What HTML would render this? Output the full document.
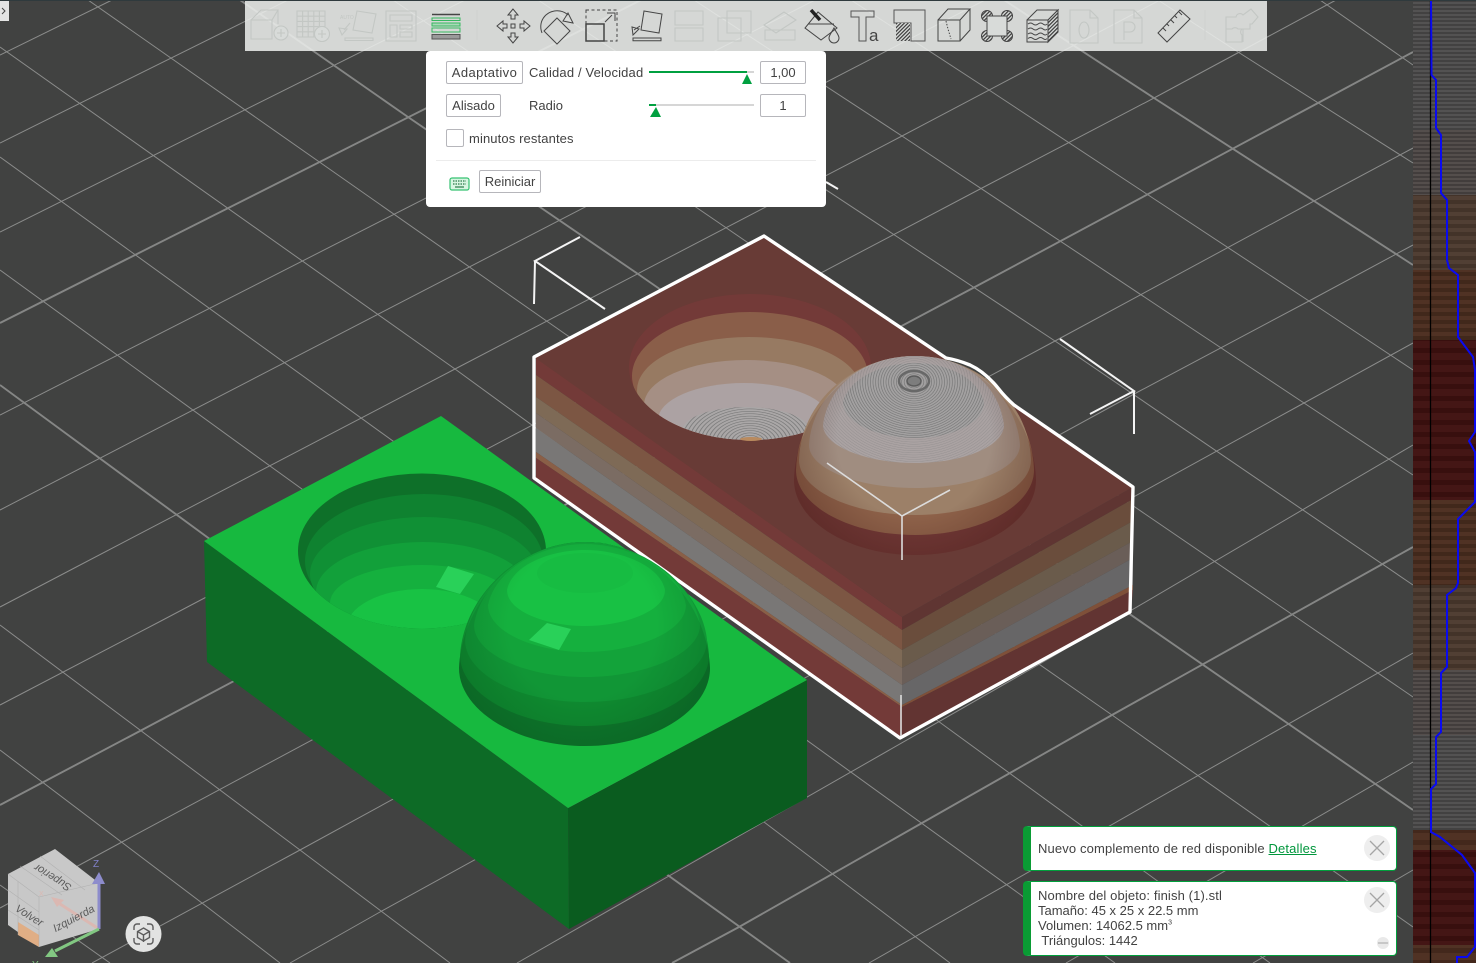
<!DOCTYPE html>
<html><head><meta charset="utf-8"><style>
html,body{margin:0;padding:0;background:#414241}
body{width:1476px;height:963px;position:relative;overflow:hidden;font-family:"Liberation Sans",sans-serif;font-size:13px;color:#424242}
svg{position:absolute;left:0;top:0}
.a{position:absolute;white-space:pre;line-height:16px}
.btn{position:absolute;box-sizing:border-box;border:1px solid #b6b6bb;border-radius:2px;height:23px;line-height:21px;text-align:center;background:#fff}
#panel{position:absolute;left:426px;top:51px;width:400px;height:156px;background:#fff;border-radius:4px}
.note{position:absolute;left:1023px;width:374px;box-sizing:border-box;background:#fff;border:1px solid #00a03c;border-left:8px solid #0a9b34;border-radius:4px}
</style></head><body>
<svg width="1476" height="963" viewBox="0 0 1476 963" xmlns="http://www.w3.org/2000/svg">
<defs>
<radialGradient id="rg" gradientUnits="userSpaceOnUse" cx="0" cy="0" r="2.6" spreadMethod="repeat" gradientTransform="translate(914 382) scale(1 .83)"><stop offset="0" stop-color="#a3a1a1"/><stop offset=".5" stop-color="#a3a1a1"/><stop offset=".8" stop-color="#747474"/><stop offset="1" stop-color="#a3a1a1"/></radialGradient>
<radialGradient id="rg2" gradientUnits="userSpaceOnUse" cx="0" cy="0" r="2.6" spreadMethod="repeat" gradientTransform="translate(914 382) scale(1 .83)"><stop offset="0" stop-color="#aaa2a2"/><stop offset=".6" stop-color="#aaa2a2"/><stop offset=".85" stop-color="#949090"/><stop offset="1" stop-color="#aaa2a2"/></radialGradient>
<radialGradient id="rb" gradientUnits="userSpaceOnUse" cx="0" cy="0" r="2.4" spreadMethod="repeat" gradientTransform="translate(750 442) scale(1.6 1)"><stop offset="0" stop-color="#aaa7a7"/><stop offset=".55" stop-color="#aaa7a7"/><stop offset=".8" stop-color="#747474"/><stop offset="1" stop-color="#aaa7a7"/></radialGradient>
<radialGradient id="sh" gradientUnits="userSpaceOnUse" cx="582" cy="625" r="135"><stop offset=".55" stop-color="#003010" stop-opacity="0"/><stop offset="1" stop-color="#003010" stop-opacity=".2"/></radialGradient>
<radialGradient id="shr" gradientUnits="userSpaceOnUse" cx="914" cy="440" r="128"><stop offset=".6" stop-color="#3c140f" stop-opacity="0"/><stop offset="1" stop-color="#3c140f" stop-opacity=".3"/></radialGradient>
<pattern id="hatch" width="2.6" height="2.6" patternUnits="userSpaceOnUse" patternTransform="rotate(45)"><rect width="2.6" height="2.6" fill="#d8dbd9"/><rect width="1.2" height="2.6" fill="#3c3c3c"/></pattern>
<pattern id="s4" width="4" height="4" patternUnits="userSpaceOnUse"><rect width="4" height="2" fill="#000" fill-opacity=".15"/><rect y="2" width="4" height="2" fill="#fff" fill-opacity=".03"/></pattern>
<pattern id="s8" width="8" height="8" patternUnits="userSpaceOnUse"><rect width="8" height="4" fill="#000" fill-opacity=".14"/><rect y="4" width="8" height="4" fill="#fff" fill-opacity=".02"/></pattern>
<pattern id="s12" width="12" height="12" patternUnits="userSpaceOnUse"><rect width="12" height="5" fill="#000" fill-opacity=".12"/><rect y="5" width="12" height="7" fill="#fff" fill-opacity=".02"/></pattern>
<clipPath id="gb"><ellipse cx="422" cy="551" rx="124" ry="77.5"/></clipPath>
<clipPath id="rbc"><ellipse cx="750" cy="367" rx="121" ry="73"/></clipPath>
</defs>
<rect width="1476" height="963" fill="#414241"/>
<!-- grid -->
<g fill="none" stroke="#8b8c8b" stroke-width="1">
<path d="M0 55L112 0M0 143L288 0M0 232L465 0M0 415L815 0M0 510L985 0M0 607L82 564 455 369 902 136 1065 50 1160 0M0 705L159 622 982 188 1154 98 1336 0M0 908L122 842 1055 341 1314 201 1413 148M92 963L300 850 1136 393 1309 301 1413 245M290 963L380 912 1304 403 1413 343M517 963L669 876 1038 665 1413 445M869 963L1413 653M1066 963L1413 762M1253 963L1413 870"/>
<path d="M0 885L110 963M0 750L202 903 280 963M0 625L300 850 381 911 450 963M0 270L270 466 764 822 950 963M0 157L1115 963M0 47L455 369 1270 963M88 0L548 322 1112 715 1413 927M393 0L725 227 1413 697M538 0L893 234 1055 341 1413 585M694 0L902 136 1304 403 1413 475M851 0L989 90 1309 301 1413 370M1158 0L1238 52 1413 163M1320 0L1413 65"/>
</g>
<g fill="none" stroke="#858685" stroke-width="1.9">
<path d="M0 323L641 0M0 805L140 731 973 288 1318 103 1413 52M672 963L739 927 1112 715 1413 547M0 385L177 515 669 876 790 963M240 0L408 117 638 274 1413 810M1004 0L1154 98 1314 201 1413 265"/>
</g>
<!-- green block -->
<path d="M204 541L568 808 569 929 207 662Z" fill="#0d6b26"/>
<path d="M568 808L807 680 807 798 569 929Z" fill="#0a5c1f"/>
<path d="M441 416L204 541 568 808 807 680Z" fill="#17b93f"/>
<ellipse cx="422" cy="551" rx="124" ry="77.5" fill="#0e7029"/>
<g clip-path="url(#gb)">
<ellipse cx="424" cy="561" rx="119" ry="67" fill="#0f8230"/>
<ellipse cx="424" cy="574" rx="114" ry="57" fill="#109035"/>
<ellipse cx="423" cy="592" rx="107" ry="50" fill="#12a03a"/>
<ellipse cx="422" cy="603" rx="92" ry="38" fill="#15b03e"/>
<ellipse cx="422" cy="629" rx="76" ry="40" fill="#18c244"/>
</g>
<path d="M448 566L474 574 460 594 436 587Z" fill="#29d159"/>
<!-- red block -->
<path d="M536 357L902 617 902 630 536 375Z" fill="#733a38"/>
<path d="M536 375L902 630 902 650 536 397Z" fill="#7c5643"/>
<path d="M536 397L902 650 902 668 536 413Z" fill="#7e6a56"/>
<path d="M536 413L902 668 902 685 536 428Z" fill="#7b6c63"/>
<path d="M536 428L902 685 902 705 536 452Z" fill="#797776"/>
<path d="M536 452L902 705 902 707 536 458Z" fill="#8a5f47"/>
<path d="M536 458L902 707 902 738 536 478Z" fill="#733a38"/>
<path d="M1133 487L902 617 902 630 1133 499Z" fill="#5f3532"/>
<path d="M1133 499L902 630 902 650 1133 521Z" fill="#6a4d3c"/>
<path d="M1133 521L902 650 902 668 1133 541Z" fill="#6a5b4b"/>
<path d="M1133 541L902 668 902 685 1133 558Z" fill="#6a5e58"/>
<path d="M1133 558L902 685 902 705 1133 585Z" fill="#676667"/>
<path d="M1133 585L902 705 902 707 1133 590Z" fill="#7f5039"/>
<path d="M1133 590L902 707 902 738 1131 612Z" fill="#623432"/>
<path d="M764 236L534 357 902 617 1133 487Z" fill="#683b36"/>
<ellipse cx="750" cy="367" rx="121" ry="73" fill="#733a38"/>
<g clip-path="url(#rbc)">
<ellipse cx="750" cy="376" rx="118" ry="64" fill="#8a5e49"/>
<ellipse cx="749" cy="390" rx="112" ry="53" fill="#977a62"/>
<ellipse cx="746" cy="405" rx="102" ry="45" fill="#a58f84"/>
<ellipse cx="744" cy="420" rx="86" ry="37" fill="#aca2a3"/>
<ellipse cx="746" cy="431" rx="64" ry="24" fill="url(#rb)"/>
</g>
<ellipse cx="751" cy="439" rx="11" ry="2" fill="#b98a5e"/>
<!-- red dome -->
<path d="M794 480C796 410 855 356 915 356C975 356 1034 410 1036 480C1036 521 981 555 915 555C849 555 794 521 794 480Z" fill="#703836"/>
<path d="M796 470C798 405 855 356 915 356C975 356 1032 405 1034 470C1034 506 980 535 915 535C850 535 796 506 796 470Z" fill="#8d6149"/>
<path d="M799 460C801 400 855 356 915 356C975 356 1029 400 1031 460C1031 490 978 515 915 515C852 515 799 490 799 460Z" fill="#9c8068"/>
<path d="M809 445C812 395 858 356 915 356C972 356 1016 395 1020 445C1020 469 972 488 915 488C858 488 809 469 809 445Z" fill="#a08d80"/>
<path d="M823 425C828 385 865 356 915 356C965 356 999 385 1004 425C1004 446 964 463 915 463C866 463 823 446 823 425Z" fill="url(#rg2)"/>
<path d="M843 402C848 380 880 363 915 363C950 363 979 380 984 402C984 423 952 438 915 438C878 438 843 423 843 402Z" fill="url(#rg)"/>
<ellipse cx="914" cy="381" rx="15" ry="10" fill="none" stroke="#686868" stroke-width="2.500"/>
<ellipse cx="914" cy="381" rx="7" ry="5" fill="#7d7d7d" stroke="#5c5c5c" stroke-width="1.500"/>
<path d="M794 480C796 410 855 356 915 356C975 356 1034 410 1036 480C1036 521 981 555 915 555C849 555 794 521 794 480Z" fill="url(#shr)"/>
<!-- white outline and boxes -->
<path d="M764 236L534 357 534 478 900 738 1130 612 1133 487 1014 405Q1005 397 998 388Q985 372 970 365Q958 360 946 358Z" fill="none" stroke="#fff" stroke-width="3.400" stroke-linejoin="round"/>
<g fill="none" stroke="#f4f4f4" stroke-width="2">
<path d="M580 237L535 261 605 309M535 261L534 304M1060 339L1134 391 1090 414M1134 391L1134 434M826 182L838 189"/>
</g>
<g fill="none" stroke="#dcdcdc" stroke-width="1.6"><path d="M827 463L902 516 950 490M902 516L902 560M901 695L901 736"/></g>
<!-- green dome -->
<path d="M459 668C462 600 520 542 585 542C650 542 707 600 710 668C710 711 652 746 585 746C518 746 459 711 459 668Z" fill="#0e762b"/>
<path d="M460 655C464 595 520 542 585 542C650 542 705 595 709 655C709 694 652 726 585 726C518 726 460 694 460 655Z" fill="#0f8a30"/>
<path d="M465 640C470 590 525 542 585 542C645 542 702 590 707 640C707 675 650 702 585 702C520 702 465 675 465 640Z" fill="#119636"/>
<path d="M474 625C480 583 530 542 585 542C640 542 695 583 700 625C700 654 645 677 585 677C525 677 474 654 474 625Z" fill="#13a33a"/>
<path d="M488 605C495 570 540 544 585 544C630 544 680 570 686 605C686 632 635 652 585 652C535 652 488 632 488 605Z" fill="#15b03e"/>
<path d="M507 590C512 565 550 550 585 550C620 550 660 565 665 590C665 612 622 626 585 626C548 626 507 612 507 590Z" fill="#18c144"/>
<ellipse cx="585" cy="573" rx="48" ry="20" fill="#17bc42"/>
<path d="M459 668C462 600 520 542 585 542C650 542 707 600 710 668C710 711 652 746 585 746C518 746 459 711 459 668Z" fill="url(#sh)"/>
<path d="M547 623L571 629 559 650 529 640Z" fill="#29d159"/>
<!-- right strip -->
<rect x="1413" y="0" width="63" height="130" fill="#4d4c4c"/>
<rect x="1413" y="130" width="63" height="65" fill="#4e4846"/>
<rect x="1413" y="195" width="63" height="75" fill="#4e3b30"/>
<rect x="1413" y="270" width="63" height="70" fill="#4c2e20"/>
<rect x="1413" y="340" width="63" height="160" fill="#401110"/>
<rect x="1413" y="500" width="63" height="85" fill="#4c2e20"/>
<rect x="1413" y="585" width="63" height="85" fill="#4e3b30"/>
<rect x="1413" y="670" width="63" height="65" fill="#4e4846"/>
<rect x="1413" y="735" width="63" height="95" fill="#4d4c4c"/>
<rect x="1413" y="830" width="63" height="20" fill="#4c2e20"/>
<rect x="1413" y="850" width="63" height="95" fill="#401110"/>
<rect x="1413" y="945" width="63" height="18" fill="#4c2e20"/>
<rect x="1413" y="0" width="63" height="195" fill="url(#s4)"/>
<rect x="1413" y="195" width="63" height="145" fill="url(#s8)"/>
<rect x="1413" y="340" width="63" height="160" fill="url(#s12)"/>
<rect x="1413" y="500" width="63" height="170" fill="url(#s8)"/>
<rect x="1413" y="670" width="63" height="160" fill="url(#s4)"/>
<rect x="1413" y="830" width="63" height="133" fill="url(#s12)"/>
<path d="M1430.500 0V963" stroke="#000" stroke-width="1.300"/>
<path d="M1431 0L1431.500 75 1436 80V128L1441 135V193L1447 200V260L1449 268 1458 275V337L1473 357 1475 370V432L1469 441 1475 452V502L1458 519V583L1456 588 1447 595V667L1441 673V732L1436 737V784L1431 789V832L1440 837 1462 855 1475 873V947L1467 957H1457V963" fill="none" stroke="#0a0af0" stroke-width="2"/>
<!-- top dark line -->
<rect width="1476" height="1" fill="#2f3a3d"/>
<!-- toolbar -->
<rect x="245" y="1" width="1022" height="50" fill="#ebeeec" fill-opacity=".87"/>
<g fill="none" stroke="#c3c7c4" stroke-width="1.100">
<path d="M251 20h21v19h-21zM251 20l10-10h17l-6 10M272 39M278 10v14"/><circle cx="281" cy="33" r="7" fill="#d8dbd9"/><path d="M277 33h8M281 29v8"/>
<path d="M297 11h28v26h-28zM302.600 11v26M308.200 11v26M313.800 11v26M319.400 11v26M297 16.200h28M297 21.400h28M297 26.600h28M297 31.800h28"/><circle cx="322" cy="34" r="7.500" fill="#d8dbd9"/><path d="M318 34h8M322 30v8"/>
<path d="M357 11l19 3-4 19-19-3zM345 38h28v2.500h-28zM342 35l-3-7 8 1zM344 30l6-7"/>
<path d="M386 11h30v30h-30zM390 15h22v6h-22zM390 25h7v12h-7zM400 25h12v4h-12zM400 32h12v5h-12z"/>
<path d="M477 10v30" stroke="#cfd2d0"/>
<path d="M675 11h28v14h-28zM675 28h28v13h-28z"/>
<path d="M727 11h24v22h-24zM718 18h23v23h-23zM727 18h14v15h-14z"/>
<path d="M765 30h30v10h-30zM764 25l20-13 12 8-20 13z"/>
<path d="M1070 10h20l8 8v25h-28zM1090 10v8h8"/><ellipse cx="1084" cy="30" rx="5" ry="8"/>
<path d="M1114 10h20l8 8v25h-28zM1134 10v8h8M1124 40V22h6a5 5 0 0 1 0 10h-6"/>
<path d="M1205 10v30" stroke="#cfd2d0"/>
<path d="M1226 17h10a4 4 0 0 1 7-2l8-6 7 8-6 7h-2v5h-8a4 4 0 0 0 0 6v7h-16zM1226 29h6a4 4 0 0 1 6 0h5v13"/>
</g>
<text x="340" y="19" font-size="5" fill="#c3c7c4" font-family="Liberation Sans,sans-serif">AUTO</text>
<g fill="none" stroke="#454545" stroke-width="1">
<path d="M432 14.500h28" stroke-width="1.600"/>
<rect x="432" y="18" width="28" height="2.500" stroke="#35b860" stroke-width="1"/>
<rect x="432" y="23" width="28" height="3" stroke="#35b860" stroke-width="1" fill="#aad8b8"/>
<rect x="432" y="28" width="28" height="4" stroke="#35b860" stroke-width="1"/>
<rect x="432" y="34.500" width="28" height="4.500" stroke="#555" fill="#9a9a9a" stroke-width="1"/>
<path d="M513 9l-5 6h3v4h4v-4h3zM513 43l-5-6h3v-4h4v4h3zM497 26l6-5v3h4v4h-4v3zM530 26l-6-5v3h-4v4h4v3zM511 24h4v4h-4z"/>
<path d="M557 18l13 13-13 13-13-13zM542 33C537 20 548 9 560 11C563 11.500 566 13 568 15M573 23l-5-10-5 8z"/>
<path d="M586 10h31v31h-31z" stroke-dasharray="3 2.500"/><path d="M586 24h18v17h-18z" stroke-width="1.500"/><path d="M605 22l7-7M607 13h8v8"/>
<path d="M644 11l18 3-3 19-18-3zM633 38h28v2.800h-28zM640 26l-6 4M632 27l1 8 6-6z"/>
<path d="M818 12L805 28 821 40 837 28zM808 24h26"/><path d="M811 10l9 10" stroke-width="3.500" stroke="#222"/>
<path d="M834 28c-2 4-5 7-5 10a5 5 0 0 0 10 0c0-3-3-6-5-10z"/>
<path d="M851 11h23v6h-8v24h-7V17h-8z" stroke="#555"/>
<path d="M894 10h31v31h-14V23h-17z" stroke="#555"/><rect x="896" y="23" width="14" height="18" fill="url(#hatch)" stroke="none"/>
<path d="M938 20h22v21h-22zM938 20l10-11h22l-10 11M970 9v21l-10 11" stroke="#444"/><path d="M946 21l2 8 3 10" stroke-dasharray="1.500 1.500"/>
<circle cx="987" cy="16" r="5.500" fill="url(#hatch)"/><circle cx="1007" cy="16" r="5.500" fill="url(#hatch)"/><circle cx="987" cy="36" r="5.500" fill="url(#hatch)"/><circle cx="1007" cy="36" r="5.500" fill="url(#hatch)"/>
<path d="M987 16h20v20h-20z" fill="#d8dbd9"/>
<path d="M1027 20h21v22h-21zM1027 20l10-10h21l-10 10" /><path d="M1048 20l10-10v22l-10 10z" fill="url(#hatch)"/>
<path d="M1028 24q2.500-2 5 0t5 0 5 0 4 0M1028 29q2.500-2 5 0t5 0 5 0 4 0M1028 34q2.500-2 5 0t5 0 5 0 4 0M1028 38.500q2.500-2 5 0t5 0 5 0 4 0" stroke-width="1"/>
<path d="M1158 33L1180 10 1190 19 1167 42zM1163 28l3 3M1167 24l2 2M1171 20l3 3M1175 16l2 2M1179 12l3 3"/>
</g>
<text x="869" y="41" font-size="17" fill="#444" font-family="Liberation Sans,sans-serif">a</text>
<!-- left widget -->
<rect x="0" y="1" width="9" height="20" fill="#e4e4e4"/><path d="M2 8l3 3-3 3" fill="none" stroke="#444"/>
<!-- view cube -->
<path d="M55 849L99 883 99 929 39 947 8 925 8 874Z" fill="#c8c8c8"/>
<path d="M18 922L39 935 39 947 18 935Z" fill="#e0ae85"/>
<path d="M8 874L39 897V947M39 897L99 883M18 881V935M8 890L39 912M8 910L39 930M20 866L62 895M40 856L85 890" fill="none" stroke="#a8a8a8" stroke-width=".6" stroke-opacity=".7"/>
<path d="M99 929L60 904" stroke="#dbb8b2" stroke-width="3"/><path d="M51 897L64 900 57 907Z" fill="#dbb8b2"/>
<path d="M99 929V884" stroke="#8d8ccc" stroke-width="3"/><path d="M99 872L92 884H105Z" fill="#8d8ccc"/>
<path d="M99 929L55 951" stroke="#82c882" stroke-width="3"/><path d="M45 957H58L52 948Z" fill="#82c882"/>
<g font-family="Liberation Sans,sans-serif" font-style="italic" fill="#5a5a5a" font-size="11">
<text transform="translate(53 877) rotate(212)" text-anchor="middle" y="3">Superior</text>
<text transform="translate(74 919) rotate(-28)" text-anchor="middle" y="3">Izquierda</text>
<text transform="translate(29 916) rotate(32)" text-anchor="middle" y="3">Volver</text>
</g>
<text x="93" y="867" font-size="10" fill="#8080c8" font-family="Liberation Sans,sans-serif">Z</text>
<text x="32" y="968" font-size="10" fill="#82c882" font-family="Liberation Sans,sans-serif">Y</text>
<text x="39" y="896" font-size="7" fill="#dbb8b2" font-family="Liberation Sans,sans-serif">X</text>
<!-- camera button -->
<circle cx="143.500" cy="934" r="18" fill="#e2e3e2"/>
<g fill="none" stroke="#5c5c5c" stroke-width="1.400">
<path d="M134 930v-3a3 3 0 0 1 3-3h3M147 924h3a3 3 0 0 1 3 3v3M153 938v3a3 3 0 0 1-3 3h-3M140 944h-3a3 3 0 0 1-3-3v-3"/>
<path d="M143.500 928l6 3.500v6l-6 3.500-6-3.500v-6zM137.500 931.500l6 3.500 6-3.500M143.500 935v7"/>
</g>
</svg>

<div id="panel"></div>
<div class="btn" style="left:446px;top:61px;width:77px;letter-spacing:.4px">Adaptativo</div>
<div class="a" style="left:529px;top:65px;letter-spacing:.16px">Calidad / Velocidad</div>
<div class="btn" style="left:446px;top:94px;width:55px">Alisado</div>
<div class="a" style="left:529px;top:98px">Radio</div>
<div class="btn" style="left:446px;top:129px;width:18px;height:18px"></div>
<div class="a" style="left:469px;top:131px;letter-spacing:.12px">minutos restantes</div>
<div class="btn" style="left:760px;top:61px;width:46px">1,00</div>
<div class="btn" style="left:760px;top:94px;width:46px">1</div>
<div class="btn" style="left:479px;top:170px;width:62px">Reiniciar</div>
<svg width="1476" height="963" style="pointer-events:none">
<rect x="436" y="160" width="380" height="1" fill="#ececec"/>
<rect x="649" y="71" width="105" height="2" fill="#d6d6d6"/><rect x="649" y="71" width="98" height="2" fill="#00a040"/>
<path d="M747 74L752 84H742Z" fill="#00a040"/>
<rect x="649" y="104" width="105" height="2" fill="#d6d6d6"/><rect x="649" y="104" width="7" height="2" fill="#00a040"/>
<path d="M656 107L661 117H650Z" fill="#00a040"/>
<rect x="450" y="178" width="19" height="12" rx="2" fill="#d8f5e2" stroke="#36c272" stroke-width="1.200"/>
<path d="M453 181h13M453 184h13" stroke="#2a7a4a" stroke-width="1.300" stroke-dasharray="1.500 1"/><path d="M455 187h9" stroke="#2a7a4a" stroke-width="1.200"/>
</svg>

<div class="note" style="top:826px;height:45px"></div>
<div class="a" style="left:1038px;top:841px;letter-spacing:.14px">Nuevo complemento de red disponible <span style="color:#00963c;text-decoration:underline">Detalles</span></div>
<div class="note" style="top:881px;height:75px"></div>
<div class="a" style="left:1038px;top:888px;line-height:15px"><span style="letter-spacing:.125px">Nombre del objeto: finish (1).stl</span>
Tamaño: 45 x 25 x 22.5 mm
Volumen: 14062.5 mm<sup style="font-size:7px;line-height:0">3</sup>
 Triángulos: 1442</div>
<svg width="1476" height="963" style="pointer-events:none">
<circle cx="1377" cy="848" r="13" fill="#eeeeee"/><path d="M1370 841l14 14M1384 841l-14 14" stroke="#a5a5a5" stroke-width="1.300"/>
<circle cx="1377" cy="900" r="13" fill="#eeeeee"/><path d="M1370 893l14 14M1384 893l-14 14" stroke="#a5a5a5" stroke-width="1.300"/>
<circle cx="1383" cy="943" r="6" fill="#e9e9e9"/><path d="M1378 943h10" stroke="#b5b5b5" stroke-width="1.300"/>
</svg>
</body></html>
